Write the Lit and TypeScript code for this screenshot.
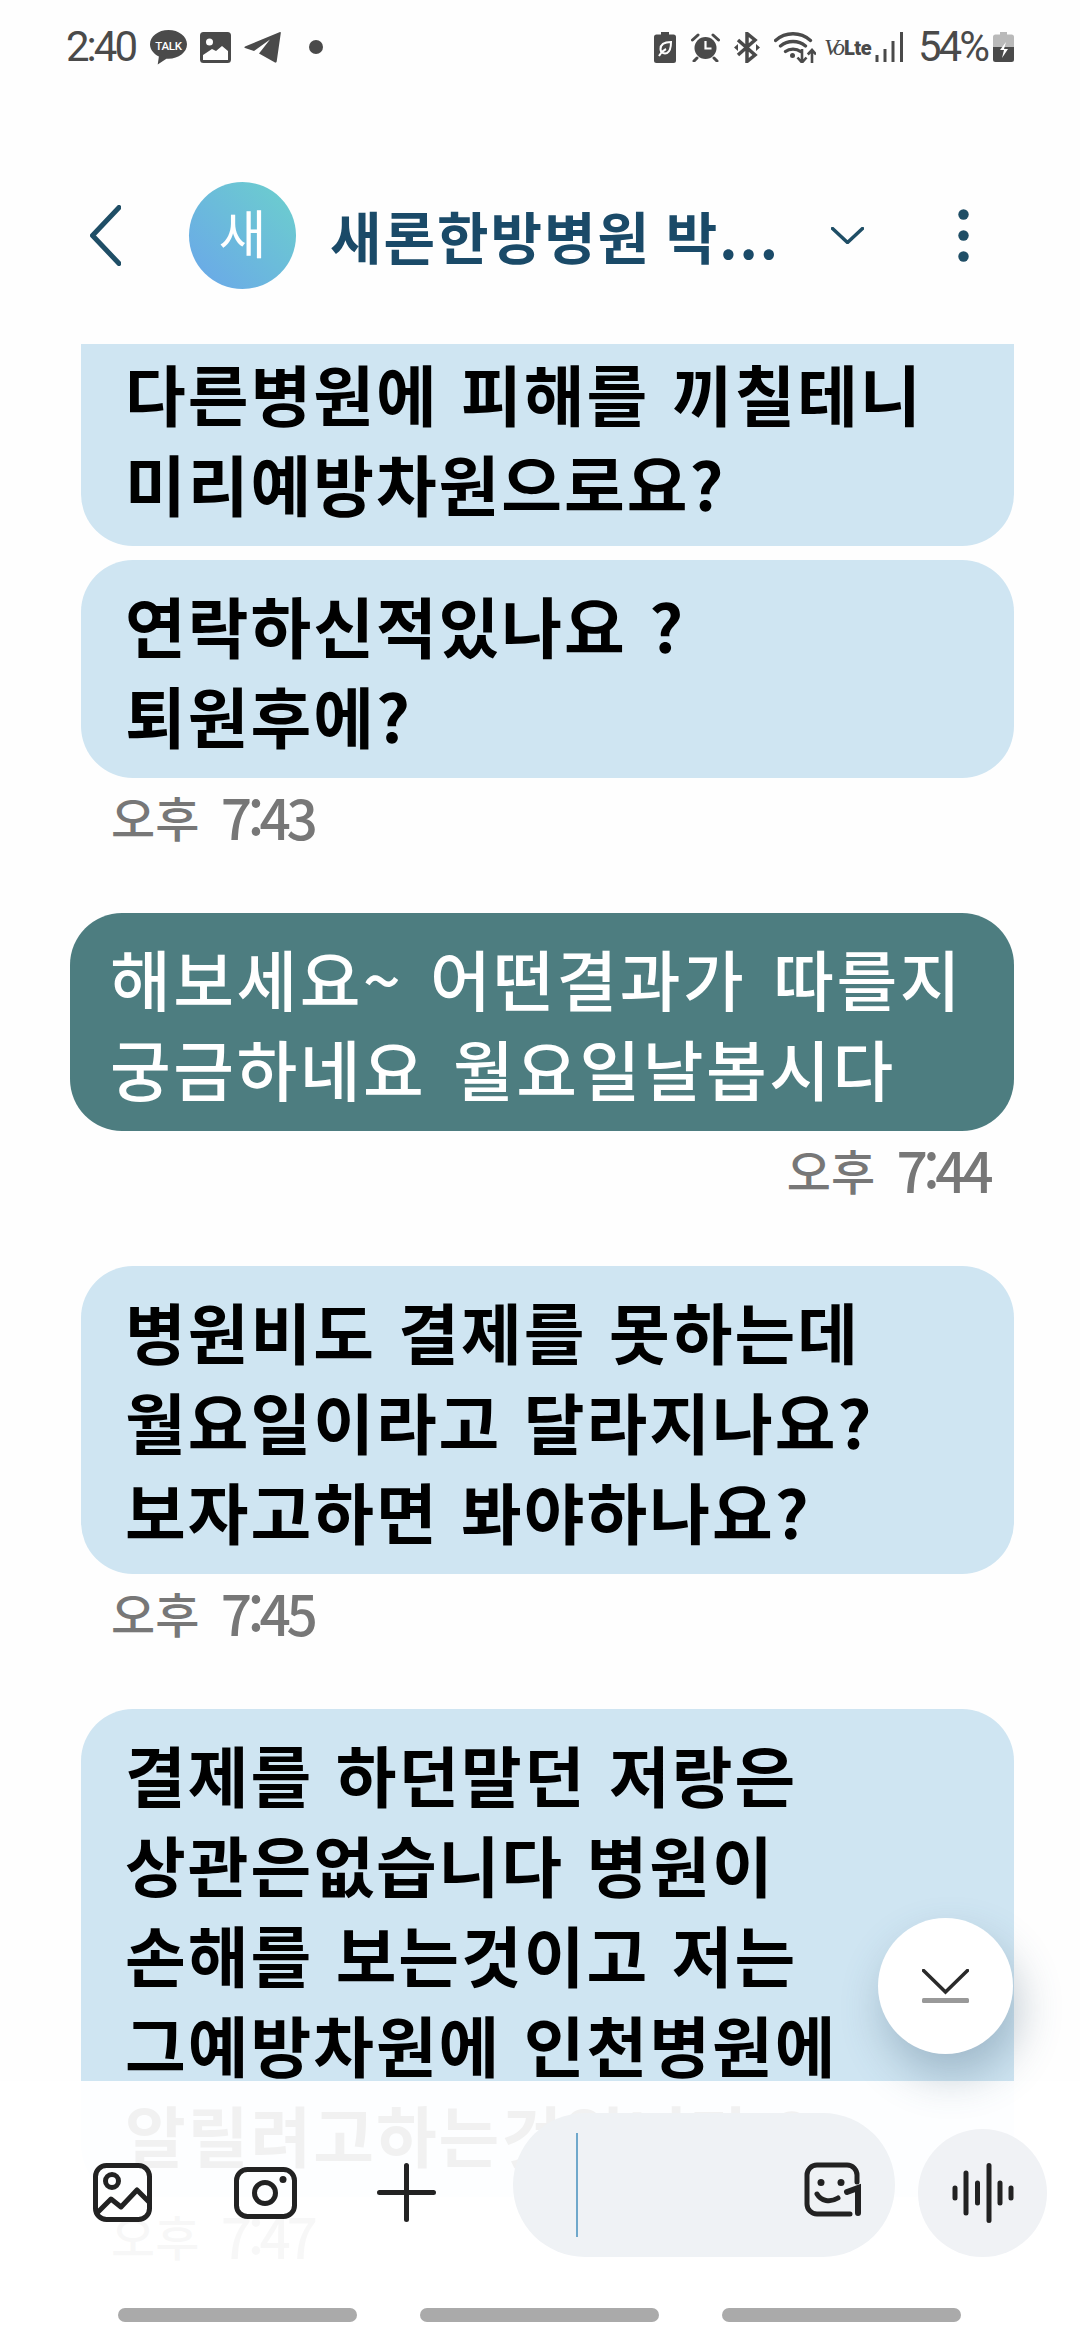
import { LitElement, html, css } from "lit";
import { customElement } from "lit/decorators.js";

const T = (d: string, t: string) => html`<span class="ampm">${d}</span> <span class="clock">${t}</span>`;

@customElement("app-root")
export class AppRoot extends LitElement {
  static styles = css`
    :host { display: block; width: 1080px; height: 2340px; position: relative; overflow: hidden; background: #fefefe;
      font-family: "Noto Sans CJK KR", "Noto Sans", sans-serif; }
    svg { display: block; flex: none; }
    .status { height: 90px; box-sizing: border-box; padding: 4px 66px 0; display: flex; align-items: center; color: #4a4a4a; }
    .st-txt { font-family: Roboto, sans-serif; font-size: 42px; letter-spacing: -3px; line-height: 1; }
    .status .l { display: flex; align-items: center; }
    .status .r { display: flex; align-items: center; margin-left: auto; }
    .volte { width: 40px; display: flex; align-items: baseline; white-space: nowrap; margin: 0 11px 0 8px; }
    .volte i { font: italic 24px "Liberation Serif", serif; letter-spacing: -3px; margin-right: 2px; }
    .volte b { font: 900 20px Roboto, sans-serif; letter-spacing: -.5px; }
    .hdr { height: 254px; box-sizing: border-box; padding: 36px 0 0 90px; display: flex; align-items: center; }
    .av { width: 107px; height: 107px; border-radius: 50%; margin-left: 68px; flex: none; display: flex; align-items: center; justify-content: center;
      color: #fff; font-size: 52px; font-weight: 400; padding-bottom: 8px; box-sizing: border-box; background: linear-gradient(45deg, #6aa6ea, #6cd0cc); }
    .title { width: 501px; margin-left: 34px; color: #1a4a68; font-size: 56px; font-weight: 700; letter-spacing: 2px; white-space: nowrap; line-height: 1.2; }
    .kebab { margin-left: 94px; }
    .list { display: flex; flex-direction: column; padding: 0 66px 0 81px; }
    .b { background: #cfe5f2; color: #000; border-radius: 52px; padding: 19px 44px; font-size: 66px; line-height: 90px; font-weight: 700;
      letter-spacing: 2px; word-spacing: 2px; white-space: pre-line; }
    .b.first { border-radius: 0 0 52px 52px; padding-top: 3px; }
    .b.next { margin-top: 14px; }
    .b.me { background: #4d7d80; color: #fff; margin-left: -11px; padding-left: 40px; font-weight: 500; letter-spacing: 2.500px; word-spacing: 6px; }
    .t { height: 76px; line-height: 76px; color: #777; font-size: 48px; font-weight: 500; padding-left: 30px; white-space: nowrap; word-spacing: 8px; }
    .t.me { text-align: right; padding: 0 25px 0 0; }
    .clock { font-size: 55px; letter-spacing: -4.500px; display: inline-block; vertical-align: top; }
    .gap { margin-top: 59px; }
    .fab { position: absolute; left: 878px; top: 1918px; width: 135px; height: 136px; border-radius: 50%; background: #fff; z-index: 2;
      box-shadow: 6px 22px 44px rgba(60, 90, 115, .32); display: flex; align-items: center; justify-content: center; }
    .over { position: absolute; left: 0; right: 0; top: 2081px; bottom: 0; background: rgba(255, 255, 255, .945); }
    .row { margin-top: 32px; height: 144px; padding-left: 93px; display: flex; align-items: center; }
    .ic { margin-top: 15px; }
    .pill { width: 382px; height: 144px; flex: none; margin-left: 77px; border-radius: 72px; background: #eff2f5; display: flex; align-items: center; box-sizing: border-box; padding: 0 33px 0 63px; }
    .caret { width: 2px; height: 104px; background: #6fa8cb; }
    .pill svg { margin: 8px 0 0 auto; }
    .mic { width: 129px; height: 128px; flex: none; margin: 15px 0 0 23px; border-radius: 50%; background: #f0f2f5; display: flex; align-items: center; justify-content: center; }
    .nav { margin-top: 51px; padding-left: 118px; display: flex; gap: 63px; }
    .nav span { width: 239px; height: 14px; border-radius: 7px; background: #aaa; }
  `;

  render() {
    const g = "#4a4a4a";
    return html`
      <div class="status">
        <div class="l">
          <span class="st-txt">2:40</span>
          <svg style="margin-left:15px" width="37" height="35" viewBox="0 0 37 35">
            <path fill="${g}" d="M18.500 0C8.300 0 0 6.400 0 14.300c0 5.200 3.600 9.700 8.900 12.200L7.700 34.500l8.700-5.800c.7.100 1.400.100 2.100.100 10.200 0 18.500-6.500 18.500-14.500S28.700 0 18.500 0z"/>
            <text x="18.500" y="19.500" text-anchor="middle" fill="#fff" font-family="Roboto, sans-serif" font-size="11.500" font-weight="500" letter-spacing="-.3">TALK</text>
          </svg>
          <svg style="margin-left:13px" width="31" height="31" viewBox="0 0 31 31">
            <path fill="${g}" fill-rule="evenodd" d="M3.500 0h24A3.500 3.500 0 0 1 31 3.500v24a3.500 3.500 0 0 1-3.500 3.500h-24A3.500 3.500 0 0 1 0 27.500v-24A3.500 3.500 0 0 1 3.500 0zM3 28h25v-9l-6-5-6 5-4-2-9 6z"/>
            <circle cx="9.500" cy="10" r="3.500" fill="#fff"/>
          </svg>
          <svg style="margin-left:13px" width="37" height="33" viewBox="0 0 37 33">
            <path fill="${g}" d="M36 1 1 15.500c-.8.400-.8 1.300 0 1.600l9 2.900L26 8.500 15 22.500l16 9c.8.400 1.500 0 1.700-.9L36.800 2c.1-.8-.2-1.300-.8-1z"/>
          </svg>
          <svg style="margin-left:28px" width="14" height="14" viewBox="0 0 14 14"><circle cx="7" cy="7" r="7" fill="${g}"/></svg>
        </div>
        <div class="r">
          <svg width="22" height="31" viewBox="0 0 22 31">
            <path fill="${g}" d="M7 0h8v2.500h4.500A2.500 2.500 0 0 1 22 5v23.500a2.500 2.500 0 0 1-2.500 2.500h-17A2.500 2.500 0 0 1 0 28.500V5a2.500 2.500 0 0 1 2.500-2.500H7z"/>
            <path fill="none" stroke="#fff" stroke-width="2" d="M17 10c-6 0-10.500 2-10.500 7 0 4 4 5 6.500 4 3-1.500 4-6 4-11zM5 24c1.500-3 4-5.500 7-7"/>
          </svg>
          <svg style="margin-left:15px" width="29" height="29" viewBox="0 0 29 29">
            <circle cx="14.500" cy="15" r="11" fill="${g}"/>
            <path stroke="${g}" stroke-width="3" stroke-linecap="round" fill="none" d="M1.500 7 7 2M27.500 7 22 2M6 25l-3 3M23 25l3 3"/>
            <path stroke="#fff" stroke-width="2.200" fill="none" d="M14.500 8v7.500h6"/>
          </svg>
          <svg style="margin-left:14px" width="26" height="31" viewBox="0 0 26 31">
            <path stroke="${g}" stroke-width="3.500" fill="none" d="M4 8l17 15-8 6.500V1.500l8 6.500L4 23"/>
            <path fill="${g}" d="M0 15.500l4-3.500v7zM26 15.500l-4-3.500v7z"/>
          </svg>
          <svg style="margin-left:14px" width="42" height="31" viewBox="0 0 42 31">
            <path stroke="${g}" stroke-width="3.300" fill="none" stroke-linecap="round" d="M1.500 8.500c10-9 25-9 35 0M6.500 14c7-6 18-6 25 0M11.500 19.500c4-3.200 11-3.200 15 0"/>
            <circle cx="18.500" cy="23.500" r="2.500" fill="${g}"/>
            <path stroke="${g}" stroke-width="2.600" fill="none" d="M28 17v13M23.500 25.500l4.500 5 4.500-5M38 31V18M33.800 22.500 38 18l4 4.500"/>
          </svg>
          <div class="volte"><i>Vo</i><b>Lte</b></div>
          <svg width="28" height="30" viewBox="0 0 28 30">
            <path stroke="${g}" stroke-width="3" fill="none" d="M2 23v7M10 17v13M18 9v21M26.500 0v30"/>
          </svg>
          <span class="st-txt" style="margin-left:15px">54%</span>
          <svg style="margin-left:6px" width="21" height="30" viewBox="0 0 21 30">
            <path fill="#b9b9b9" d="M7 0h7v2.500h4.500A2.500 2.500 0 0 1 21 5v10H0V5a2.500 2.500 0 0 1 2.500-2.500H7z"/>
            <path fill="${g}" d="M0 15h21v12.500a2.500 2.500 0 0 1-2.500 2.500h-16A2.500 2.500 0 0 1 0 27.500z"/>
            <path fill="#fff" d="M13 10 7 18h4l-2 8 6-9h-4z"/>
          </svg>
        </div>
      </div>

      <div class="hdr">
        <svg width="31" height="61" viewBox="0 0 31 61"><path d="M29 2.500 2.500 30.500 29 58.500" fill="none" stroke="#1f4e66" stroke-width="5" stroke-linecap="round" stroke-linejoin="round"/></svg>
        <div class="av">새</div>
        <div class="title">새론한방병원 박...</div>
        <svg width="33" height="17" viewBox="0 0 33 17"><path d="M1.500 1.500 16.500 15.500 31.500 1.500" fill="none" stroke="#1f4e66" stroke-width="3.500" stroke-linecap="round"/></svg>
        <svg class="kebab" width="11" height="53" viewBox="0 0 11 53" fill="#1f4e66"><circle cx="5.500" cy="5.500" r="5.200"/><circle cx="5.500" cy="26.500" r="5.200"/><circle cx="5.500" cy="47.500" r="5.200"/></svg>
      </div>

      <div class="list" lang="ko">
        <div class="b first">${"다른병원에 피해를 끼칠테니\n미리예방차원으로요?"}</div>
        <div class="b next">${"연락하신적있나요 ?\n퇴원후에?"}</div>
        <div class="t">${T("오후", "7:43")}</div>
        <div class="b me gap">${"해보세요~ 어떤결과가 따를지\n궁금하네요 월요일날봅시다"}</div>
        <div class="t me">${T("오후", "7:44")}</div>
        <div class="b gap">${"병원비도 결제를 못하는데\n월요일이라고 달라지나요?\n보자고하면 봐야하나요?"}</div>
        <div class="t">${T("오후", "7:45")}</div>
        <div class="b gap">${"결제를 하던말던 저랑은\n상관은없습니다 병원이\n손해를 보는것이고 저는\n그예방차원에 인천병원에\n알릴려고하는것입니다 ?"}</div>
        <div class="t">${T("오후", "7:47")}</div>
      </div>

      <div class="fab">
        <svg width="47" height="35" viewBox="0 0 47 35">
          <path d="M1.500 1.500 23.500 23 45.500 1.500" fill="none" stroke="#2a2a2a" stroke-width="3.500" stroke-linecap="round"/>
          <rect x="0" y="29" width="47" height="5" rx="1.500" fill="#999"/>
        </svg>
      </div>

      <div class="over">
        <div class="row">
          <svg class="ic" width="59" height="59" viewBox="0 0 59 59" fill="none" stroke="#222" stroke-width="5">
            <rect x="2.500" y="2.500" width="54" height="54" rx="11"/>
            <circle cx="19" cy="18" r="6.500"/>
            <path d="M4 50 18 36l10 8 16-17 12 12" stroke-linejoin="round"/>
          </svg>
          <svg class="ic" style="margin-left:82px" width="63" height="52" viewBox="0 0 63 52" fill="none" stroke="#222" stroke-width="5">
            <rect x="2.500" y="2.500" width="58" height="47" rx="11"/>
            <circle cx="31" cy="26" r="10.500"/>
            <circle cx="49" cy="12.500" r="3.500" fill="#222" stroke="none"/>
          </svg>
          <svg class="ic" style="margin-left:80px" width="59" height="59" viewBox="0 0 59 59" fill="none" stroke="#222" stroke-width="5" stroke-linecap="round">
            <path d="M29.500 2.500v54M2.500 29.500h54"/>
          </svg>
          <div class="pill">
            <div class="caret"></div>
            <svg width="58" height="55" viewBox="0 0 58 55" fill="none" stroke="#222" stroke-width="5" stroke-linecap="round">
              <path d="M53 20V13a10 10 0 0 0-10-10H13A10 10 0 0 0 3 13v29a10 10 0 0 0 10 10h33"/>
              <circle cx="17" cy="20.500" r="3.500" fill="#222" stroke="none"/>
              <circle cx="37" cy="20.500" r="3.500" fill="#222" stroke="none"/>
              <path d="M13 32c4 7 13 9 21 4"/>
              <path d="M43 30l11-4v25" stroke-width="6"/>
            </svg>
          </div>
          <div class="mic">
            <svg width="62" height="60" viewBox="0 0 62 60" fill="none" stroke="#222" stroke-width="5" stroke-linecap="round">
              <path d="M3 25v10M14 10v40M25.500 20v20M37 2.500v55M48 20v20M59 25v10"/>
            </svg>
          </div>
        </div>
        <div class="nav"><span></span><span></span><span></span></div>
      </div>
    `;
  }
}
